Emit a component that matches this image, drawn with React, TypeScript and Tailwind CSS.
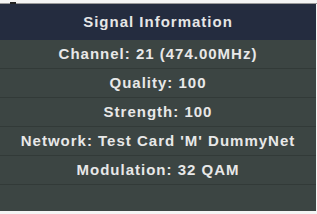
const rows = [
  "Channel: 21 (474.00MHz)",
  "Quality: 100",
  "Strength: 100",
  "Network: Test Card 'M' DummyNet",
  "Modulation: 32 QAM",
];

export default function App() {
  return (
    <div
      className="relative flex h-[214px] w-[317px] flex-col overflow-hidden bg-[#f4f4f4]"
      style={{ fontFamily: '"Liberation Sans", Arial, sans-serif' }}
    >
      <div className="h-[4px] shrink-0 border-b border-[#9a9a9a]" />
      <div className="absolute left-[10px] top-[2px] h-[2px] w-[6px] bg-[#222]" />
      <div className="flex h-[207px] w-[316px] shrink-0 flex-col bg-[#3c4543]">
        <div className="flex h-[36px] shrink-0 items-center justify-center bg-[#242c3f] text-[15px] font-bold tracking-[1px] text-[#e6e6e6]">
          Signal Information
        </div>
        {rows.map((r) => (
          <div
            key={r}
            className="flex h-[29px] shrink-0 items-center justify-center border-b border-[#323a38] text-[15px] font-bold tracking-[1px] text-[#e8e8e8]"
          >
            {r}
          </div>
        ))}
        <div className="flex-1" />
      </div>
    </div>
  );
}
